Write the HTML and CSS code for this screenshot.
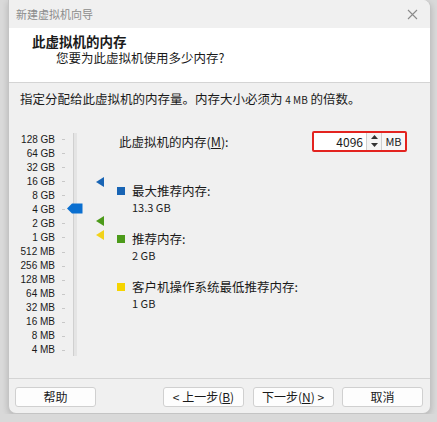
FILE: index.html
```html
<!DOCTYPE html>
<html lang="zh-CN">
<head>
    <meta charset="UTF-8">
    <meta name="viewport" content="width=device-width, initial-scale=1.0">
    <title>新建虚拟机向导</title>
    <link rel="stylesheet" href="styles.css">
</head>
<body>

<div class="window">
    <div class="titlebar">
        <span class="title">新建虚拟机向导</span>
        <svg class="close" width="11" height="11" viewBox="0 0 11 11">
            <path d="M1 1 L10 10 M10 1 L1 10" stroke="#8a8a8a" stroke-width="1.1" fill="none"/>
        </svg>
    </div>

    <div class="header">
        <div class="heading">此虚拟机的内存</div>
        <div class="subheading">您要为此虚拟机使用多少内存?</div>
    </div>

    <div class="content">
        <p class="intro">指定分配给此虚拟机的内存量。内存大小必须为 <span class="unit">4 MB</span> 的倍数。</p>

        <div class="main">
            <div class="slider">
                <div class="scale">
                    <div class="step"><span>128 GB</span><i></i></div>
                    <div class="step"><span>64 GB</span><i></i></div>
                    <div class="step"><span>32 GB</span><i></i></div>
                    <div class="step"><span>16 GB</span><i></i></div>
                    <div class="step"><span>8 GB</span><i></i></div>
                    <div class="step"><span>4 GB</span><i></i></div>
                    <div class="step"><span>2 GB</span><i></i></div>
                    <div class="step"><span>1 GB</span><i></i></div>
                    <div class="step"><span>512 MB</span><i></i></div>
                    <div class="step"><span>256 MB</span><i></i></div>
                    <div class="step"><span>128 MB</span><i></i></div>
                    <div class="step"><span>64 MB</span><i></i></div>
                    <div class="step"><span>32 MB</span><i></i></div>
                    <div class="step"><span>16 MB</span><i></i></div>
                    <div class="step"><span>8 MB</span><i></i></div>
                    <div class="step"><span>4 MB</span><i></i></div>
                </div>
                <div class="track">
                    <svg class="thumb" width="16" height="11" viewBox="0 0 16 11">
                        <path d="M0 5.5 L5 0.5 L15.5 0.5 L15.5 10.5 L5 10.5 Z" fill="#0a6fd0"/>
                    </svg>
                    <svg class="marker marker-max" width="8" height="10" viewBox="0 0 8 10">
                        <path d="M0 5 L8 0 L8 10 Z" fill="#1864b4"/>
                    </svg>
                    <svg class="marker marker-rec" width="8" height="10" viewBox="0 0 8 10">
                        <path d="M0 5 L8 0 L8 10 Z" fill="#4c9a1a"/>
                    </svg>
                    <svg class="marker marker-min" width="8" height="10" viewBox="0 0 8 10">
                        <path d="M0 5 L8 0 L8 10 Z" fill="#f2d21a"/>
                    </svg>
                </div>
            </div>

            <div class="settings">
                <div class="mem-row">
                    <span class="mem-label">此虚拟机的内存(<u>M</u>):</span>
                    <div class="spinbox">
                        <span class="value">4096</span>
                        <span class="spin">
                            <span class="spin-btn">
                                <svg width="7" height="4" viewBox="0 0 7 4"><path d="M0 4 L3.5 0 L7 4 Z" fill="#333"/></svg>
                            </span>
                            <span class="spin-btn">
                                <svg width="7" height="4" viewBox="0 0 7 4"><path d="M0 0 L3.5 4 L7 0 Z" fill="#333"/></svg>
                            </span>
                        </span>
                        <span class="suffix">MB</span>
                    </div>
                </div>

                <div class="legend">
                    <div class="legend-item">
                        <div class="legend-title"><span class="swatch swatch-max"></span>最大推荐内存:</div>
                        <div class="legend-value">13.3 GB</div>
                    </div>
                    <div class="legend-item">
                        <div class="legend-title"><span class="swatch swatch-rec"></span>推荐内存:</div>
                        <div class="legend-value">2 GB</div>
                    </div>
                    <div class="legend-item">
                        <div class="legend-title"><span class="swatch swatch-min"></span>客户机操作系统最低推荐内存:</div>
                        <div class="legend-value">1 GB</div>
                    </div>
                </div>
            </div>
        </div>
    </div>

    <div class="footer">
        <a href="#" class="button">帮助</a>
        <div class="nav-buttons">
            <a href="#" class="button">&lt; 上一步(<u>B</u>)</a>
            <a href="#" class="button">下一步(<u>N</u>) &gt;</a>
            <a href="#" class="button">取消</a>
        </div>
    </div>
</div>

</body>
</html>
```

FILE: styles.css
```css
body {
    margin: 0;
    background-color: #d9d9d9;
    font-family: "Noto Sans CJK SC", "Noto Sans", sans-serif;
    font-size: 12.5px;
    color: #1a1a1a;
}

.window {
    display: flex;
    flex-direction: column;
    width: 423px;
    height: 414px;
    margin-left: 8px;
    background-color: #f0f0f0;
    border: 1px solid #c4c4c4;
    border-top: none;
    border-radius: 0 8px 8px 8px;
    box-shadow: 0 2px 6px rgba(0, 0, 0, 0.18);
    box-sizing: border-box;
    overflow: hidden;
}

.titlebar {
    display: flex;
    justify-content: space-between;
    align-items: center;
    height: 28px;
    padding: 0 12px 0 7px;
    background-color: #f0f0f0;
}

.title {
    color: #8c8c8c;
    font-size: 11px;
}

.header {
    height: 50px;
    padding: 4px 0 0 23px;
    background-color: #fff;
    border-bottom: 1px solid #d4d4d4;
}

.heading {
    font-size: 13.5px;
    font-weight: bold;
    line-height: 18px;
}

.subheading {
    padding-left: 24px;
    line-height: 16px;
}

.content {
    flex: 1;
    padding: 0 12px 0 11px;
}

.intro {
    margin: 8px 0 0;
    line-height: 16px;
    height: 16px;
}

.unit {
    font-size: 10px;
    line-height: 10px;
}

.main {
    display: flex;
    margin-top: 24px;
}

.slider {
    display: flex;
    margin-left: -6px;
}

.scale {
    display: flex;
    flex-direction: column;
    padding-top: 1.5px;
}

.step {
    display: flex;
    align-items: center;
    height: 14.07px;
    font-family: "Liberation Sans", Arial, sans-serif;
    font-size: 10px;
    line-height: 12px;
    white-space: nowrap;
}

.step span {
    width: 41px;
    text-align: right;
}

.step i {
    width: 3px;
    height: 1px;
    margin-left: 7px;
    background-color: #c8c8c8;
}

.track {
    position: relative;
    width: 3px;
    height: 223px;
    margin: 2px 0 0 8px;
    background-color: #e4e4e4;
    border-left: 1px solid #d0d0d0;
}

.thumb {
    position: absolute;
    left: -7px;
    top: 70px;
}

.marker {
    position: absolute;
    left: 22px;
}

.marker-max {
    top: 44px;
}

.marker-rec {
    top: 83px;
}

.marker-min {
    top: 97px;
}

.settings {
    flex: 1;
    margin-left: 40px;
}

.mem-row {
    display: flex;
    justify-content: space-between;
    align-items: center;
    height: 20px;
}

.mem-label {
    margin-left: 2px;
}

.spinbox {
    display: flex;
    align-items: stretch;
    width: 95px;
    height: 21px;
    margin-right: 11px;
    border: 2px solid #e3231f;
    border-radius: 2px;
    box-sizing: border-box;
    background-color: #fff;
}

.value {
    flex: 1;
    padding-right: 3px;
    text-align: right;
    font-size: 12px;
    line-height: 17px;
}

.spin {
    display: flex;
    flex-direction: column;
    width: 14px;
    border-left: 1px solid #cfcfcf;
    border-right: 1px solid #cfcfcf;
    background-color: #f4f4f4;
}

.spin-btn {
    display: flex;
    flex: 1;
    justify-content: center;
    align-items: center;
}

.suffix {
    width: 23px;
    text-align: center;
    line-height: 17px;
    font-size: 11px;
    background-color: #f7f7f7;
}

.legend {
    display: flex;
    flex-direction: column;
    gap: 15px;
    margin-top: 32px;
}

.legend-title {
    display: flex;
    align-items: center;
    line-height: 16px;
}

.legend-value {
    padding-left: 15px;
    font-size: 11px;
    line-height: 17px;
}

.swatch {
    width: 8px;
    height: 8px;
    margin-right: 7px;
}

.swatch-max {
    background-color: #1864b4;
}

.swatch-rec {
    background-color: #4c9a1a;
}

.swatch-min {
    background-color: #f5d400;
}

.footer {
    display: flex;
    justify-content: space-between;
    height: 35px;
    padding: 8px 7px 0 6px;
    border-top: 1px solid #d4d4d4;
    box-sizing: border-box;
}

.nav-buttons {
    display: flex;
    gap: 8.5px;
}

.button {
    width: 81px;
    height: 20px;
    line-height: 18px;
    font-size: 12px;
    text-align: center;
    color: #1a1a1a;
    text-decoration: none;
    background-color: #fdfdfd;
    border: 1px solid #d0d0d0;
    border-radius: 3px;
    box-sizing: border-box;
}
```
